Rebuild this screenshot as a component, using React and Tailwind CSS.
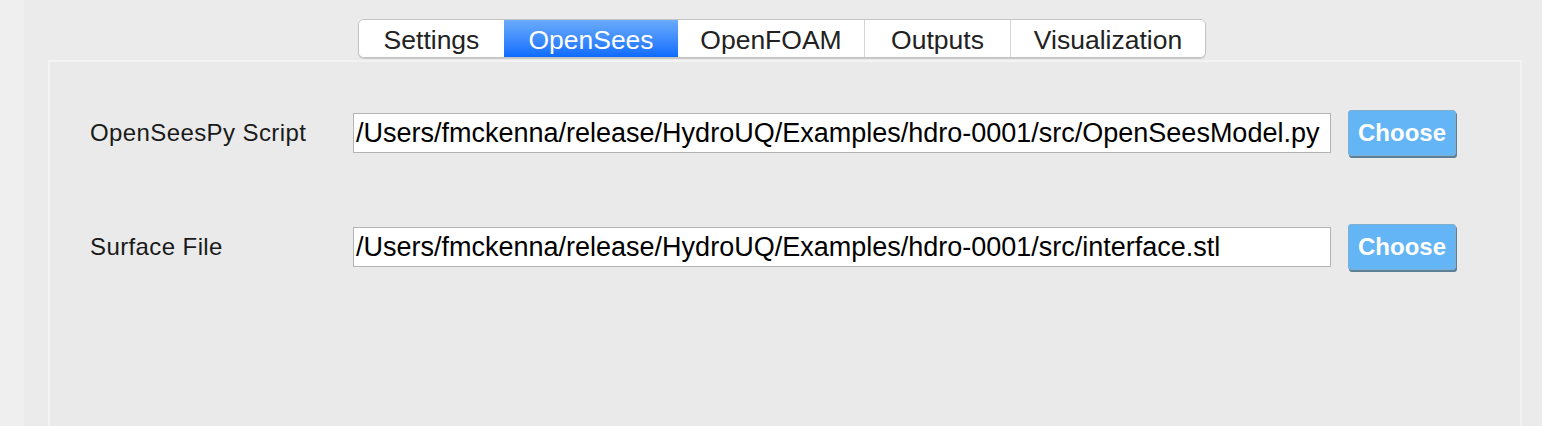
import React from "react";

const tabs = ["Settings", "OpenSees", "OpenFOAM", "Outputs", "Visualization"];
const tabWidths = ["w-[145px]", "w-[174px]", "w-[186px]", "w-[146px]", "w-[195px]"];

const rows = [
  {
    label: "OpenSeesPy Script",
    path: "/Users/fmckenna/release/HydroUQ/Examples/hdro-0001/src/OpenSeesModel.py",
  },
  {
    label: "Surface File",
    path: "/Users/fmckenna/release/HydroUQ/Examples/hdro-0001/src/interface.stl",
  },
];

function TabBar({ active }) {
  return (
    <div className="flex justify-center pr-[6px]">
      <div className="flex h-[39px] rounded-[6px] border border-[#c3c3c3] bg-white shadow-[0_1px_1px_rgba(0,0,0,0.15)] overflow-hidden">
        {tabs.map((t, i) => (
          <div
            key={t}
            className={`${tabWidths[i]} flex items-center justify-center pt-[4px] text-[26.5px] ${
              t === active
                ? "bg-gradient-to-b from-[#6aabfa] to-[#0a6bff] text-white"
                : "text-[#222] bg-white"
            } ${i > 0 && tabs[i - 1] !== active && t !== active ? "border-l border-[#d6d6d6]" : ""}`}
          >
            {t}
          </div>
        ))}
      </div>
    </div>
  );
}

function FileRow({ label, path }) {
  return (
    <div className="flex items-center h-[46px]">
      <div className="w-[263px] text-[24px] tracking-[0.4px] text-[#1a1a1a]">{label}</div>
      <div className="w-[978px] h-[40px] bg-white border border-[#b4b4b4] flex items-center pl-[2px] text-[27px] text-black whitespace-nowrap overflow-hidden">
        {path}
      </div>
      <button className="ml-[17px] w-[108px] h-[46px] rounded-[3px] bg-[#64b5f6] border border-[#7fb0cf] shadow-[1px_2px_0_#5b7f96] text-white font-bold text-[24px] flex items-center justify-center">
        Choose
      </button>
    </div>
  );
}

export default function App() {
  return (
    <div
      className="flex h-[426px] w-[1542px] overflow-hidden bg-[#ebebeb]"
      style={{ fontFamily: '"Liberation Sans", Arial, sans-serif' }}
    >
      <div className="w-[24px] shrink-0 bg-[#efefef]" />
      <div className="flex-1 pt-[19px] pl-[24px] pr-[20px]">
        <TabBar active="OpenSees" />
        <div className="mt-[2px] h-[400px] border-2 border-[#f3f3f3] bg-[#eaeaea] pl-[40px] pt-[48px] flex flex-col gap-[68px]">
          {rows.map((r) => (
            <FileRow key={r.label} label={r.label} path={r.path} />
          ))}
        </div>
      </div>
    </div>
  );
}
